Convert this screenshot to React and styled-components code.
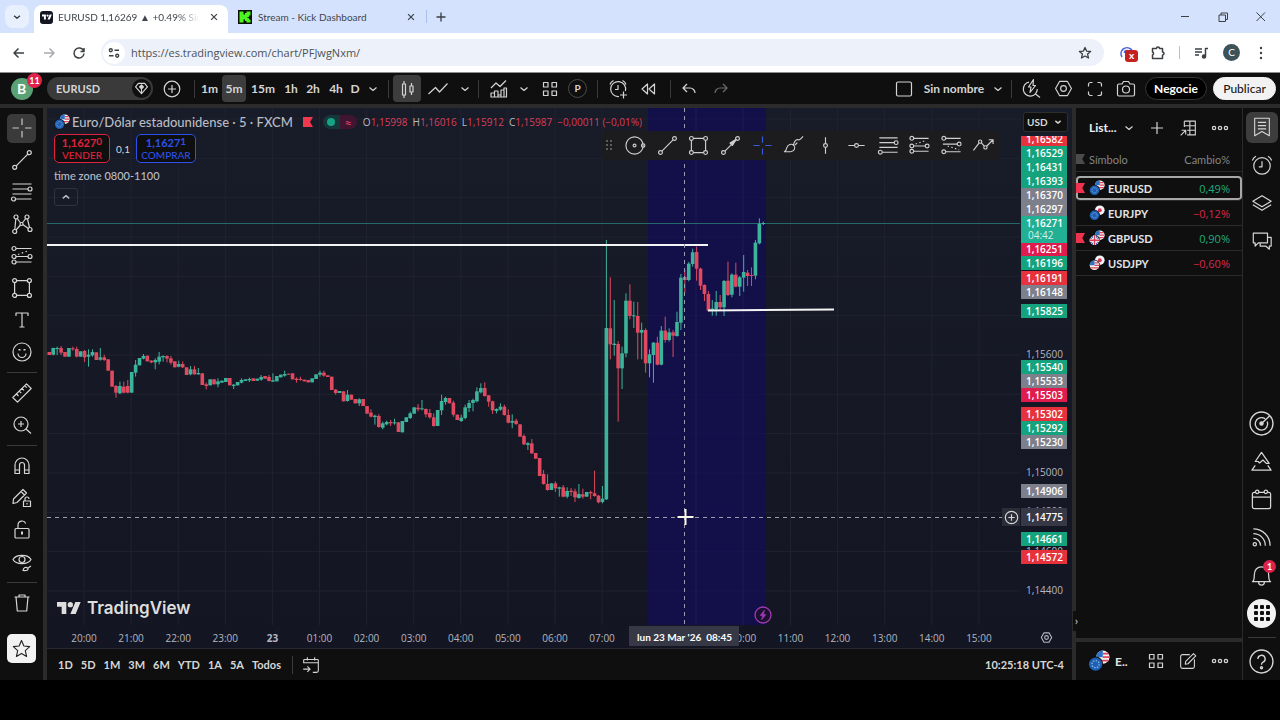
import styled, { createGlobalStyle } from "styled-components";

const UP = "#3cb49c";
const DOWN = "#e0495f";
const TAG = { green: "#14a37d", red: "#e5323d", pink: "#e01b4d", gray: "#7d7f8a", live: "#22b095" };

const HOUR = 47.1;
const FIRST_HOUR = 37;

// one entry per 5m bar: direction, body top, body bottom, [wick top, wick bottom], in thirds of a pixel
const RUNS = [
    {
        top: 222,
        bars: `d 66 75,u 54 74 53 76,u 54 56 50 75,d 54 68 48 75,d 66 80,u 54 80,d 55 58 50 62,d 57 80 50 82,u 64 80,
        d 63 82 60 96,u 74 80 58 110,u 66 76 58 80,d 67 90,u 82 89 54 92,d 82 90 74 93,d 88 122,d 122 170,d 168 188 165 203,
        u 168 190 155 192,d 170 188 155 190,d 168 188 150 190,u 126 188,u 104 128 90 140,u 84 106,u 78 86 72 88,d 77 94,
        d 92 97 90 100,u 90 97 85 118,u 80 95 66 103,u 78 82 76 95,d 78 86 76 97,d 85 98 78 104,d 94 112,u 102 110 92 112,
        d 102 112 94 114,d 112 135,u 118 133 108 136,d 118 133 108 134,u 129 133 114 134,d 130 165,d 163 168 158 178,
        u 148 166,d 148 163,u 154 163 145 172,u 152 158,u 144 156,d 144 166,u 164 168 162 177,u 156 166,u 150 158 145 160,
        u 148 153,u 147 151 143 156,d 145 153,u 146 152,u 141 149 135 152,d 138 146,d 141 153 135 154,u 151 155 130 156,
        u 138 154,u 134 142,u 132 137 122 140,d 131 134,d 130 148,d 146 150 142 158,d 147 150 140 152,d 149 154,d 150 157,
        u 145 157,u 133 147,u 128 134 122 140,d 128 137 122 140,d 136 141,d 140 180,d 179 189 177 194,u 183 189,d 184 214,
        u 194 213 180 215,d 194 209,d 207 220,u 208 220 205 228`,
    },
    {
        top: 262,
        bars: `d 87 108,d 108 131,d 128 140 118 142,u 137 141 134 164,d 138 171 132 173,u 160 173 155 178,u 156 163 152 166,
        d 156 160 150 168,u 157 160 146 164,d 157 186,u 153 187,u 142 156,u 130 144 125 147,u 112 131,d 113 118 102 124,
        u 115 118 90 121,d 117 133 115 142,d 129 142 117 146,d 142 168 130 170,u 120 168,u 93 121 74 135,u 84 96 80 104,
        d 84 100,d 98 134 92 140,d 134 150,u 143 153 134 156,u 112 144 104 148,u 99 114 90 126,u 90 99 86 124,u 64 94 52 97,
        u 54 67 40 70,d 54 78 37 80,d 76 95 75 110,d 94 121 92 132,u 117 123 115 130,u 110 119 100 122,d 110 135 104 137,
        d 135 158 118 160,u 153 158 133 175,d 152 162 146 165,d 163 200,d 198 223 193 225,u 220 225 216 240,
        d 220 250 207 252,d 249 266,d 264 318,d 312 342 300 344,d 342 360 313 362,u 340 360,d 340 355 334 366,
        u 352 356 350 380,d 352 380 345 382,u 363 380 352 385,d 362 366 354 378,d 364 382 356 396,u 372 384 342 386,
        d 373 380 356 386,u 366 380,d 366 370 362 388,d 370 378 302 380,d 377 397 375 400,u 386 396 348 400,
        u -126 388 -390 390`,
    },
    {
        top: 82,
        bars: `d 415 463 262 508,u 461 465 330 497,d 462 535 453 695,u 490 535 470 597,u 332 490 310 502,d 332 378 283 388,
        u 376 379 335 414,d 378 428 336 508,u 420 428 398 508,d 420 520 415 548,u 493 520 478 562,u 458 495 456 578,
        d 458 524 440 526,u 422 524 408 526,d 422 450 380 458,u 427 450 415 455,d 427 437 420 501,u 396 438 365 440,
        u 263 398 252 420,d 261 270 240 308,u 221 270 216 274,u 187 222 176 230,d 186 236 170 272,d 236 287 233 300,
        d 285 312 283 333,d 312 362 303 364,u 356 360 330 377,u 336 358 303 377,d 336 352 315 362,u 273 352 270 378,
        d 272 315 215 318,u 254 314 250 322,d 254 290 218 292,u 262 290 258 318,u 246 263 195 305,d 248 258 240 288,
        d 255 258 232 288,u 158 257 150 268,u 101 160 85 163,u 99 101 95 105`,
    },
];

const bars = RUNS.flatMap(({ top, bars }) =>
    bars.split(",").map((bar) => {
        const [dir, ...v] = bar.trim().split(" ");
        const [a, b, hi = a, lo = b] = v.map((n) => top + Number(n) / 3);
        return { up: dir === "u", a, b, hi, lo };
    })
);

// the cursor label hides 08:00 and 09:00
const times = ["20:00", "21:00", "22:00", "23:00", "23", "01:00", "02:00", "03:00", "04:00", "05:00", "06:00", "07:00",
    "", "", "10:00", "11:00", "12:00", "13:00", "14:00", "15:00"];

const prices = [
    ["1,15600", 246], ["1,15000", 364], ["1,14800", 403], ["1,14600", 443], ["1,14400", 482],
    ["1,16582", 31, "red"], ["1,16529", 45, "green"], ["1,16431", 59, "green"], ["1,16393", 73, "green"],
    ["1,16370", 87, "gray"], ["1,16297", 101, "gray"], ["1,16251", 141, "pink"], ["1,16196", 155, "green"],
    ["1,16191", 170, "red"], ["1,16148", 184, "gray"], ["1,15825", 203, "green"], ["1,15540", 259, "green"],
    ["1,15533", 273, "gray"], ["1,15503", 287, "pink"], ["1,15302", 306, "red"], ["1,15292", 320, "green"],
    ["1,15230", 334, "gray"], ["1,14906", 383, "gray"], ["1,14661", 431, "green"], ["1,14572", 449, "red"],
];

const watchlist = [
    { name: "EURUSD", change: "0,49%", flags: ["us", "eu"], marked: true, selected: true },
    { name: "EURJPY", change: "−0,12%", flags: ["jp", "eu"] },
    { name: "GBPUSD", change: "0,90%", flags: ["us", "gb"], marked: true },
    { name: "USDJPY", change: "−0,60%", flags: ["jp", "us"] },
];

const dot = (x, y, r = 2) => <circle cx={x} cy={y} r={r} />;

// all icons are drawn on a 24 unit grid
const ICONS = {
    down: <path d="M8.5 10.5l3.5 3 3.5-3" />,
    up: <path d="M8.5 13.5l3.5-3 3.5 3" />,
    close: <path d="M8.5 8.5l7 7M15.5 8.5l-7 7" />,
    plus: <path d="M12 6v12M6 12h12" />,
    back: <path d="M17 12H7M11.5 7.5L7 12l4.5 4.5" />,
    forward: <path d="M7 12h10M12.5 7.5L17 12l-4.5 4.5" />,
    reload: <path d="M16.6 10A5 5 0 1 0 17 12.5M17 7v3.5h-3.5" />,
    tune: <><circle cx="8.5" cy="9" r="1.6" /><path d="M12.5 9h5M6.5 15h5" /><circle cx="15.5" cy="15" r="1.6" /></>,
    bookmarkStar: <path d="M12 6.5l1.6 3.6 4 .4-3 2.6.9 3.9-3.5-2-3.5 2 .9-3.9-3-2.6 4-.4z" />,
    puzzle: <path d="M6.5 7.5h4a1.5 1.5 0 0 1 3 0h3v3.5a1.5 1.5 0 0 1 0 3v3.5h-10v-3.5a1.6 1.6 0 0 0 0-3z" />,
    music: <><path d="M6 8h7M6 11h7M6 14h4M16.5 15.5v-8h2.5" /><circle cx="15" cy="15.5" r="1.5" fill="currentColor" /></>,
    kebab: <g fill="currentColor" stroke="none">{dot(12, 7, 1.2)}{dot(12, 12, 1.2)}{dot(12, 17, 1.2)}</g>,
    minimize: <path d="M8 11.5h8" />,
    restore: <path d="M8 10h6.5v6.5H8zM10 10V8h6.5v6.5h-2" />,
    winClose: <path d="M7.5 7.5L16 16M16 7.5L7.5 16" />,
    gem: <><path d="M8 5.5h8l3.5 4.5-7.500 8.5L4.500 10z" /><path d="M12 7.500l2.500 2.500-2.500 2.500L9.500 10z" fill="currentColor" /><path d="M12 12.5V18" /></>,
    plusCircle: <><circle cx="12" cy="12" r="7.8" /><path d="M12 8v8M8 12h8" /></>,
    candles: <path d="M7.5 7h3v11h-3zM9 4v3M9 18v3M15 9h3v6h-3zM16.5 6v3M16.5 15v3" />,
    line: <path d="M2.5 17l7-6.5 4 4.5 8-8.5" />,
    indicators: <path d="M4 20v-4h3.5v4zM7.5 20v-6H11v6M11 18h3v2M14 20v-7h3M17 20v-9h2.5v9zM4 20h15.5M4 11l5-5 4 3.5 6-6" />,
    grid: <path d="M5.5 5.5H10V10H5.5zM14 5.5h4.5V10H14zM5.5 14H10v4.5H5.5zM14 14h4.5v4.5H14z" />,
    alarmAdd: <path d="M13 19.5a7.5 7.5 0 1 1 6.4-5.5M12 8v4.5H9M4 7.5a7 7 0 0 1 3.5-4M20 7.5a7 7 0 0 0-3.5-4M17.5 14.5v7M14 18h7" />,
    rewind: <path d="M11.5 7v10L6 12zM18.5 7v10L13 12z" />,
    undo: <path d="M10 7l-4 4 4 4M6 11h7a5 5 0 0 1 5 5" />,
    redo: <path d="M14 7l4 4-4 4M18 11h-7a5 5 0 0 0-5 5" />,
    square: <rect x="4.5" y="5" width="15" height="14" rx="1.5" />,
    quick: <><path d="M10 5.2a7 7 0 1 0 8.3 6.8M16.5 17l4.5 3.5" /><path d="M14.5 2.5L9.5 10H12l-1 5.5 5.5-7H14z" /></>,
    hexagon: <><path d="M8 4.5h8l4.3 7.5-4.3 7.5H8L3.7 12z" /><circle cx="12" cy="12" r="3" /></>,
    fullscreen: <path d="M5.5 9.5v-2a2 2 0 0 1 2-2h2M14.5 5.5h2a2 2 0 0 1 2 2v2M18.5 14.5v2a2 2 0 0 1-2 2h-2M9.5 18.5h-2a2 2 0 0 1-2-2v-2" />,
    camera: <><path d="M5 7h3l1.5-2.5h5L16 7h3a1.5 1.5 0 0 1 1.5 1.5v9A1.5 1.5 0 0 1 19 19H5a1.5 1.5 0 0 1-1.5-1.5v-9A1.5 1.5 0 0 1 5 7z" /><circle cx="12" cy="12.5" r="3.5" /></>,
    cross: <path d="M12 2.5V9M12 15v6.5M2.5 12H9M15 12h6.5" />,
    trend: <>{dot(4.7, 19.3)}{dot(19.3, 4.7)}<path d="M6.2 17.8L17.8 6.2" /></>,
    fib: <>{dot(20, 9)}{dot(3.5, 19)}<path d="M2.5 4h19M2.5 9H18M2.5 14h19M5.5 19h16" /></>,
    pattern: <>{dot(6, 5)}{dot(17, 5)}{dot(4.7, 19.5)}{dot(20, 17.5)}{dot(11.5, 12, 1.5)}<path d="M5.8 7l-1 10.5M7.2 6.5l3.5 4.5M15.8 6.5l-3.5 4.5M17.5 7l2 8.5M18.3 16.5l-5.5-4M10.5 13L6 18" /></>,
    forecast: <>{dot(4, 4.5)}{dot(4, 12.5)}{dot(20, 12.5)}{dot(4, 18)}<path d="M6 4.5h15.5M6 12.5h12M6 18h15.5" /><path d="M8 10.5l11-4" strokeDasharray="1.5 2.5" /></>,
    forecastDown: <>{dot(4, 4.5)}{dot(4, 18.5)}{dot(20, 10.5)}<path d="M6 4.5h15.5M3 10.5h15M6 18.5h15.5" /><path d="M8 12.5l12 4" strokeDasharray="1.5 2.5" /></>,
    rect: <>{dot(4.6, 4.6)}{dot(19.4, 4.6)}{dot(4.6, 19.4)}{dot(19.4, 19.4)}<path d="M6.6 4.6h10.8M6.6 19.4h10.8M4.6 6.6v10.8M19.4 6.6v10.8" /></>,
    text: <path d="M6 8V5h12v3M12 5v14M9.5 19h5" />,
    smile: <><circle cx="12" cy="12" r="9" /><path d="M8 13.5a4 4 0 0 0 8 0" /><path d="M9.5 9v1.5M14.5 9v1.5" strokeWidth="2" /></>,
    ruler: <path d="M2.8 16.5L16.5 2.8l4.7 4.7L7.5 21.2zM6.5 13l2 2M9.3 10.2l2 2M12 7.4l2 2M14.8 4.7l2 2" />,
    zoomIn: <><circle cx="11" cy="11" r="7" /><path d="M16 16l5 4.5M11 8v6M8 11h6" /></>,
    magnet: <path d="M5 19.5V11a7 7 0 0 1 14 0v8.5h-4.5V11a2.5 2.5 0 0 0-5 0v8.5zM5 16h4.5M14.5 16H19" />,
    pencilLock: <path d="M3 17.5L3.5 13 13 3.5 16.5 7 7 16.5zM11 5.5L14.5 9M13.5 15h7v5.5h-7zM15 15v-2a2 2 0 0 1 4 0M17 17v1.5" />,
    lock: <><rect x="5" y="10.5" width="14" height="9.5" rx="1" /><path d="M8 10.5V7a4 4 0 0 1 7.7-1.5" /><path d="M12 13.5v3" strokeWidth="2" /></>,
    eye: <><path d="M3 9.5C6 4 18 4 21 9.5 18 15 6 15 3 9.5z" /><circle cx="12" cy="9.5" r="3" /><path d="M13 20.5c.5-3 3-4 4.5-2.5s0 3-4.5 2.5zM18 18l3-2" /></>,
    trash: <path d="M4.5 6h15M9 6V4h6v2M6 6l1.3 14h9.4L18 6" />,
    star: <path d="M12 2l3 6.8 7.3.8-5.5 5 1.6 7.4-6.4-3.8L5.6 22l1.6-7.4-5.5-5L9 8.8z" />,
    cycle: <><circle cx="11" cy="12" r="9" />{dot(11, 12, 1.5)}{dot(20, 12, 1.8)}</>,
    arrow: <>{dot(4.7, 19.3)}{dot(19.3, 4.7)}<path d="M6.2 17.8L17.8 6.2" /><path d="M11.5 9.5l6.5-4-4 6.5z" fill="currentColor" /></>,
    brush: <path d="M2.5 18.5c1.5-.5 2-2 2.5-4 .8-3.5 5-5 7.5-2.5 2 2.5.5 6-3.5 6.5zM12 12.5c0-4 2.5-7.5 5-6.5 1.5.7 2-.5 5-3.5M13.5 11.5L16 9" />,
    vline: <>{dot(12, 12)}<path d="M12 3.5V10M12 14v6.5" /></>,
    hline: <>{dot(12, 12)}<path d="M3.5 12H10M14 12h6.5" /></>,
    zigzag: <>{dot(8.5, 8, 1.7)}{dot(14, 14, 1.7)}<path d="M1.5 17l5.8-7.5M9.8 9.2l3 3.5M15.2 12.8L22 6M17.5 6H22v4.5" /></>,
    table: <path d="M8 4.5h12v15h-9M8 4.5V11M8 9.5h12M14 4.5v15M11 14.5h9M4 20l5.5-5.5M5 14.5h4.5V19" />,
    dots: <>{dot(5.5, 12, 1.8)}{dot(12, 12, 1.8)}{dot(18.5, 12, 1.8)}</>,
    list: <path d="M4 2.5h16v19L12 17l-8 4.5zM7.5 7h9M7.5 10.5h9M7.5 14h9" />,
    clock: <><circle cx="12" cy="13" r="9" /><path d="M12 8v6H8.5M1.5 7a9 9 0 0 1 4-4.5M22.5 7a9 9 0 0 0-4-4.5" /></>,
    layers: <path d="M12 4l10 6-10 6-10-6zM2 14l10 6 10-6" />,
    chat: <path d="M2.5 3.5H18V14H8l-3.5 3.5V14h-2zM18 8h4v9.5h-2V21l-4-3.5h-6V14" />,
    target: <><circle cx="12" cy="12" r="11" /><path d="M15.5 7.5A6 6 0 1 0 17.5 10" /><circle cx="12" cy="12" r="1.5" fill="currentColor" /><path d="M12 12l8-7.5" /></>,
    mountain: <path d="M12 2.5L20 14h-3l-3.5-3.5-3.5 3L8.500 12h-3zM5.5 16L2 21h20l-3.5-5" />,
    calendar: <><rect x="2.5" y="4.5" width="19" height="17" rx="2" /><path d="M2.5 9.5h19" /><g fill="#0f0f0f">{dot(7.5, 4, 1.8)}{dot(16.5, 4, 1.8)}</g></>,
    feed: <>{dot(5, 19, 1.7)}<path d="M3.5 13a7.5 7.5 0 0 1 7.5 7.5M3.5 8A12.500 12.500 0 0 1 16 20.5M3.5 3A17.5 17.5 0 0 1 21 20.5" /></>,
    bell: <path d="M2.5 18.5c2-1 2-3 2-7C4.5 6 7.500 3 12 3s7.5 3 7.5 8.5c0 4 0 6 2 7zM9 19c0 4 6 4 6 0" />,
    help: <><circle cx="12" cy="12" r="11" /><path d="M8.5 9.5a3.5 3.5 0 1 1 5 3.2c-1 .5-1.5 1-1.5 2.3" /><circle cx="12" cy="18" r="1" /></>,
    goto: <path d="M4 10V7a1 1 0 0 1 1-1h14a1 1 0 0 1 1 1v11a2 2 0 0 1-2 2h-4M4 9.5h16M8 3.5V7M16 3.5V7M3.5 16.5h7M8 13.5l3 3-3 3" />,
    edit: <path d="M14 5H6a2 2 0 0 0-2 2v11a2 2 0 0 0 2 2h11a2 2 0 0 0 2-2v-8M9 15.5l.5-3L18 4l2.5 2.5L12 15z" />,
};

function Icon({ name, size = 24, weight = 1.2 }) {
    return (
        <svg width={size} height={size} viewBox="0 0 24 24" fill="none" stroke="currentColor" strokeWidth={weight}
            strokeLinejoin="round" aria-hidden="true">
            {ICONS[name]}
        </svg>
    );
}

function FlagDisc({ code, x, y }) {
    const r = 4.8;
    if (code === "eu") {
        return (
            <g>
                <circle cx={x} cy={y} r={r} fill="#1d5fb4" />
                <circle cx={x} cy={y} r="2.6" fill="none" stroke="#8fb9dc" strokeDasharray="1 1" />
            </g>
        );
    }
    if (code === "jp") {
        return (
            <g>
                <circle cx={x} cy={y} r={r} fill="#f4f4f4" />
                <circle cx={x} cy={y} r="2" fill="#d8335a" />
            </g>
        );
    }
    if (code === "gb") {
        return (
            <g>
                <circle cx={x} cy={y} r={r} fill="#5a6fb0" />
                <path d={`M${x - 3.3} ${y - 3.3}l6.6 6.6M${x + 3.3} ${y - 3.3}l-6.6 6.6`} stroke="#eee" />
                <path d={`M${x} ${y - r}v${2 * r}M${x - r} ${y}h${2 * r}`} stroke="#fff" strokeWidth="3" />
                <path d={`M${x} ${y - r}v${2 * r}M${x - r} ${y}h${2 * r}`} stroke="#dd3b55" strokeWidth="1.5" />
            </g>
        );
    }
    return (
        <g>
            <circle cx={x} cy={y} r={r} fill="#f2f2f2" />
            <path d={`M${x} ${y - 2.5}h4M${x} ${y}h4.5M${x - 4} ${y + 2.5}h8`} stroke="#e0455a" strokeWidth="1.3" />
            <path d={`M${x} ${y - r}v${r}h${-r}a${r} ${r} 0 0 1 ${r} ${-r}z`} fill="#2d72c4" />
        </g>
    );
}

function FlagPair({ flags, size = 16 }) {
    return (
        <svg width={size} height={size} viewBox="0 0 16 16" aria-hidden="true">
            <FlagDisc code={flags[0]} x={10.8} y={5.2} />
            <circle cx="5.5" cy="10.3" r="5.5" fill="#0f0f0f" />
            <FlagDisc code={flags[1]} x={5.5} y={10.3} />
        </svg>
    );
}

function Flag({ color, width = 9 }) {
    return (
        <svg width={width} height="10" viewBox="0 0 10 10" preserveAspectRatio="none" aria-hidden="true">
            <path d="M0 0h10L7 5l3 5H0z" fill={color} />
        </svg>
    );
}

function LogoMark({ width = 24, height = 12 }) {
    return (
        <svg width={width} height={height} viewBox="0 4 36 18" fill="currentColor" aria-hidden="true">
            <path d="M14 22H7V11H0V4h14zM28 22h-8l7.5-18h8z" />
            <circle cx="20" cy="8" r="4" />
        </svg>
    );
}

function Plot() {
    return (
        <Canvas aria-label="EURUSD 5m">
            <g stroke="#20232f">
                {times.map((t, i) => (
                    <line key={i} x1={FIRST_HOUR + HOUR * i} x2={FIRST_HOUR + HOUR * i} y1="0" y2="517" />
                ))}
                {Array.from({ length: 13 }, (_, i) => (
                    <line key={i} x1="0" x2="100%" y1={11 + 39.33 * i} y2={11 + 39.33 * i} />
                ))}
            </g>
            <rect x="601" y="0" width="118" height="517" fill="#130f49" />
            <g stroke="#1e1b55">
                <line x1="649" x2="649" y1="0" y2="517" />
                <line x1="696" x2="696" y1="0" y2="517" />
                {Array.from({ length: 13 }, (_, i) => (
                    <line key={i} x1="601" x2="719" y1={11 + 39.33 * i} y2={11 + 39.33 * i} opacity="0.4" />
                ))}
            </g>
            <line x1="0" x2="100%" y1="115.5" y2="115.5" stroke="#23696a" />
            {bars.map(({ up, a, b, hi, lo }, i) => {
                const x = 2.3 + i * 3.923;
                return (
                    <g key={i} fill={up ? UP : DOWN}>
                        <rect x={x - 0.5} y={hi} width="1" height={lo - hi} />
                        <rect x={x - 1.8} y={a} width="3.6" height={Math.max(b - a, 1)} />
                    </g>
                );
            })}
            <g stroke="#f4f4f4" strokeWidth="2">
                <line x1="0" x2="661" y1="137" y2="137" />
                <line x1="661" x2="787" y1="202.5" y2="201.5" />
            </g>
            <g stroke="#9a9daa" strokeDasharray="4 4">
                <line x1="637.5" x2="637.5" y1="0" y2="517" />
                <line x1="0" x2="100%" y1="409.5" y2="409.5" />
            </g>
            <path d="M638.5 401v16M630.5 409h16" stroke="#fbfbe4" strokeWidth="2" />
            <g transform="translate(716 507)" stroke="#a13bb5" fill="none">
                <circle r="8" fill="#1c0f30" strokeWidth="1.3" />
                <path d="M1.5-5L-3 .5h2.5L-1.5 5 3-.5H.5z" fill="#a13bb5" strokeWidth="0.5" />
            </g>
        </Canvas>
    );
}

function BrowserChrome() {
    return (
        <header>
            <TabStrip>
                <TabSearch aria-label="Buscar pestañas"><Icon name="down" weight={1.8} size={20} /></TabSearch>
                <Tab $active $width={194}>
                    <Favicon><LogoMark width={10} height={6} /></Favicon>
                    <TabTitle $fade>EURUSD 1,16269 ▲ +0.49% Sin</TabTitle>
                    <Icon name="close" size={20} weight={1.5} />
                </Tab>
                <Tab $width={198}>
                    <svg width="14" height="14" viewBox="0 0 14 14" aria-hidden="true">
                        <rect width="14" height="14" fill="#081004" />
                        <path d="M1.5 1.5h4v3H7V3h1.5V1.5h4v4H11V7H9.5v1H11v1.5h1.5v3h-4V11H7V9.5H5.5v3h-4z" fill="#4df51e" />
                    </svg>
                    <TabTitle>Stream - Kick Dashboard</TabTitle>
                    <Icon name="close" size={20} weight={1.5} />
                </Tab>
                <TabRule $gap={0} />
                <ChromeButton aria-label="Nueva pestaña" $width={28}><Icon name="plus" size={18} weight={1.8} /></ChromeButton>
                <Spacer />
                <ChromeButton aria-label="Minimizar" $width={38}><Icon name="minimize" weight={1} /></ChromeButton>
                <ChromeButton aria-label="Restaurar" $width={38}><Icon name="restore" weight={1} /></ChromeButton>
                <ChromeButton aria-label="Cerrar" $width={38}><Icon name="winClose" weight={1} /></ChromeButton>
            </TabStrip>
            <AddressRow>
                <ChromeButton aria-label="Atrás" $width={30}><Icon name="back" weight={1.5} /></ChromeButton>
                <ChromeButton aria-label="Adelante" $width={30} $dim><Icon name="forward" weight={1.5} /></ChromeButton>
                <ChromeButton aria-label="Recargar" $width={30}><Icon name="reload" weight={1.5} /></ChromeButton>
                <Omnibox>
                    <SiteInfo><Icon name="tune" size={22} weight={1.5} /></SiteInfo>
                    <UrlInput aria-label="Dirección" defaultValue="https://es.tradingview.com/chart/PFJwgNxm/" />
                    <Icon name="bookmarkStar" weight={1.3} />
                </Omnibox>
                <Extension>
                    <svg width="16" height="16" viewBox="0 0 16 16" fill="none" aria-hidden="true">
                        <path d="M3 12a6 6 0 1 1 10 0M5.5 8a2.5 2.5 0 0 1 5 0" stroke="#4a63d8" strokeWidth="1.6" />
                    </svg>
                    <ExtensionBadge>x</ExtensionBadge>
                </Extension>
                <ChromeButton aria-label="Extensiones" $width={30}><Icon name="puzzle" weight={1.5} /></ChromeButton>
                <TabRule $gap={6} />
                <ChromeButton aria-label="Multimedia" $width={30}><Icon name="music" weight={1.5} /></ChromeButton>
                <Profile>C</Profile>
                <ChromeButton aria-label="Menú" $width={30}><Icon name="kebab" /></ChromeButton>
            </AddressRow>
        </header>
    );
}

function TopBar() {
    return (
        <Bar>
            <AvatarSlot>
                <Avatar>B</Avatar>
                <AvatarBadge>11</AvatarBadge>
            </AvatarSlot>
            <SymbolPill>
                EURUSD
                <SymbolGem><Icon name="gem" size={19} weight={1.4} /></SymbolGem>
            </SymbolPill>
            <Tool $width={38} aria-label="Comparar"><Icon name="plusCircle" /></Tool>
            <Rule $width={6} />
            <Tool $width={25}>1m</Tool>
            <Tool $width={24} $on>5m</Tool>
            <Tool $width={34}>15m</Tool>
            <Tool $width={22}>1h</Tool>
            <Tool $width={22}>2h</Tool>
            <Tool $width={24}>4h</Tool>
            <Tool $width={14}>D</Tool>
            <Tool $width={22} aria-label="Intervalos"><Icon name="down" /></Tool>
            <Rule $width={9} />
            <Tool $width={28} $on aria-label="Velas"><Icon name="candles" /></Tool>
            <Tool $width={34} aria-label="Línea"><Icon name="line" /></Tool>
            <Tool $width={20} aria-label="Tipos"><Icon name="down" /></Tool>
            <Rule $width={6} />
            <Tool $width={36} aria-label="Indicadores"><Icon name="indicators" /></Tool>
            <Tool $width={14} aria-label="Favoritos"><Icon name="down" /></Tool>
            <Tool $width={37} aria-label="Plantillas"><Icon name="grid" /></Tool>
            <RoundTool>P</RoundTool>
            <Rule $width={21} />
            <Tool $width={20} aria-label="Alerta"><Icon name="alarmAdd" /></Tool>
            <Tool $width={40} aria-label="Repetición"><Icon name="rewind" /></Tool>
            <Rule $width={4} />
            <Tool $width={34} aria-label="Deshacer"><Icon name="undo" /></Tool>
            <Tool $width={30} $dim aria-label="Rehacer"><Icon name="redo" /></Tool>
            <Spacer />
            <Tool $width={28} aria-label="Diseño"><Icon name="square" /></Tool>
            <Tool $width={72}>Sin nombre</Tool>
            <Tool $width={16} aria-label="Diseños"><Icon name="down" /></Tool>
            <Rule $width={10} />
            <Tool $width={30} aria-label="Búsqueda rápida"><Icon name="quick" /></Tool>
            <Tool $width={34} aria-label="Configuración"><Icon name="hexagon" size={23} /></Tool>
            <Tool $width={30} aria-label="Pantalla completa"><Icon name="fullscreen" /></Tool>
            <Tool $width={32} aria-label="Captura"><Icon name="camera" /></Tool>
            <Pill>Negocie</Pill>
            <Pill $light>Publicar</Pill>
        </Bar>
    );
}

function DrawingRail() {
    const groups = [
        ["trend", "fib", "pattern", "forecast", "rect", "text", "smile"],
        ["ruler", "zoomIn"],
        ["magnet", "pencilLock", "lock", "eye"],
        ["trash"],
    ];
    return (
        <LeftRail>
            <RailButton aria-label="cross"><RailFace><Icon name="cross" /></RailFace></RailButton>
            {groups.map((group, i) => (
                <RailGroup key={i}>
                    {group.map((name) => (
                        <RailButton key={name} aria-label={name}><Icon name={name} /></RailButton>
                    ))}
                </RailGroup>
            ))}
            <Spacer />
            <RailButton aria-label="star"><RailFace $light><Icon name="star" size={19} weight={1.4} /></RailFace></RailButton>
        </LeftRail>
    );
}

function Legend() {
    const ohlc = [["O", "1,15998"], ["H", "1,16016"], ["L", "1,15912"], ["C", "1,15987"]];
    return (
        <LegendBox>
            <LegendRow>
                <FlagPair flags={["us", "eu"]} />
                <LegendTitle>Euro/Dólar estadounidense · 5 · FXCM</LegendTitle>
                <Flag color="#f0384f" width={10} />
                <Status>
                    <StatusHalf $bg="#14373a"><StatusDot /></StatusHalf>
                    <StatusHalf $bg="#40152f">≈</StatusHalf>
                </Status>
                {ohlc.map(([k, v]) => (
                    <Quote key={k}><b>{k}</b>{v}</Quote>
                ))}
                <Quote>−0,00011 (−0,01%)</Quote>
            </LegendRow>
            <TradeRow>
                <TradeButton $color="#e0213f" $width={56}><span>1,1627<sup>0</sup></span>VENDER</TradeButton>
                <Spread>0,1</Spread>
                <TradeButton $color="#2d51e8" $width={60}><span>1,1627<sup>1</sup></span>COMPRAR</TradeButton>
            </TradeRow>
            <StudyName>time zone 0800-1100</StudyName>
            <Collapse aria-label="Contraer"><Icon name="up" size={22} weight={1.5} /></Collapse>
        </LegendBox>
    );
}

function Chart() {
    const favorites = ["cycle", "trend", "rect", "arrow", "cross", "brush", "vline", "hline", "fib", "forecast", "forecastDown", "zigzag"];
    return (
        <ChartColumn>
            <ChartArea>
                <Pane>
                    <Plot />
                    <Legend />
                    <FavoritesBar>
                        <Grip />
                        {favorites.map((name) => (
                            <FavoriteTool key={name} $blue={name === "cross"} aria-label={name}><Icon name={name} size={23} /></FavoriteTool>
                        ))}
                    </FavoritesBar>
                    <Watermark><LogoMark /> TradingView</Watermark>
                    <AddAlert aria-label="Añadir alerta"><Icon name="plusCircle" size={19} weight={1.5} /></AddAlert>
                </Pane>
                <PriceAxis>
                    {prices.map(([text, y, kind]) => (
                        <PriceTag key={text} $kind={kind} style={{ top: y - 7 }}>{text}</PriceTag>
                    ))}
                    <LiveTag style={{ top: 108 }}>1,16271<small>04:42</small></LiveTag>
                    <CursorPrice style={{ top: 400 }}>1,14775</CursorPrice>
                    <AxisHead>
                        <CurrencyBox>
                            <Currency aria-label="Moneda" defaultValue="USD"><option>USD</option></Currency>
                            <Icon name="down" size={18} weight={1.8} />
                        </CurrencyBox>
                    </AxisHead>
                </PriceAxis>
            </ChartArea>
            <TimeAxis>
                {times.map((t, i) => t && (
                    <TimeLabel key={i} $bold={t === "23"} style={{ left: FIRST_HOUR + HOUR * i }}>{t}</TimeLabel>
                ))}
                <CursorTime style={{ left: 637 }}><span>lun 23 Mar '26</span><span>08:45</span></CursorTime>
                <AxisSettings aria-label="Ajustes del eje"><Icon name="hexagon" size={15} weight={1.8} /></AxisSettings>
            </TimeAxis>
            <RangeBar>
                {["1D", "5D", "1M", "3M", "6M", "YTD", "1A", "5A", "Todos"].map((r) => (
                    <Range key={r}>{r}</Range>
                ))}
                <Rule $width={6} />
                <Tool $width={32} aria-label="Ir a"><Icon name="goto" size={22} /></Tool>
                <Spacer />
                <Clock>10:25:18 UTC-4</Clock>
            </RangeBar>
        </ChartColumn>
    );
}

function WatchPanel() {
    return (
        <Panel>
            <PanelHead>
                <PanelTitle>List...</PanelTitle>
                <Tool $width={24} aria-label="Listas"><Icon name="down" /></Tool>
                <Tool $width={32} aria-label="Añadir"><Icon name="plus" /></Tool>
                <Tool $width={30} aria-label="Vista"><Icon name="table" size={22} /></Tool>
                <Tool $width={34} aria-label="Más"><Icon name="dots" size={22} weight={1.4} /></Tool>
            </PanelHead>
            <Table>
                <thead>
                    <HeadRow>
                        <FlagCell as="th" aria-label="Marca"><Flag color="#4b4b4b" /></FlagCell>
                        <NameHead>Símbolo</NameHead>
                        <ChangeHead>Cambio%</ChangeHead>
                    </HeadRow>
                </thead>
                <tbody>
                    {watchlist.map((w) => (
                        <Row key={w.name} $selected={w.selected}>
                            <FlagCell>{w.marked && <Flag color="#ee3350" />}</FlagCell>
                            <NameCell><FlagPair flags={w.flags} />{w.name}</NameCell>
                            <ChangeCell $down={w.change.startsWith("−")}>{w.change}</ChangeCell>
                        </Row>
                    ))}
                </tbody>
            </Table>
            <Spacer />
            <CollapsePanel aria-label="Ocultar panel">›</CollapsePanel>
            <DetailBar>
                <FlagPair flags={["us", "eu"]} size={22} />
                <DetailName>E..</DetailName>
                <Tool $width={32} aria-label="Vista"><Icon name="grid" /></Tool>
                <Tool $width={32} aria-label="Nota"><Icon name="edit" size={22} /></Tool>
                <Tool $width={32} aria-label="Más"><Icon name="dots" size={22} weight={1.4} /></Tool>
            </DetailBar>
        </Panel>
    );
}

function WidgetRail() {
    return (
        <RightRail>
            <WidgetButton aria-label="list"><WidgetFace><Icon name="list" size={22} /></WidgetFace></WidgetButton>
            {["clock", "layers", "chat"].map((n) => (
                <WidgetButton key={n} aria-label={n}><Icon name={n} size={22} weight={1.3} /></WidgetButton>
            ))}
            <Spacer />
            {["target", "mountain", "calendar", "feed"].map((n) => (
                <WidgetButton key={n} aria-label={n}><Icon name={n} size={n === "target" ? 25 : 23} weight={1.3} /></WidgetButton>
            ))}
            <WidgetButton aria-label="bell"><Icon name="bell" size={23} weight={1.3} /><BellBadge>1</BellBadge></WidgetButton>
            <WidgetButton aria-label="apps">
                <AppsFace>
                    <svg width="16" height="16" viewBox="0 0 16 16" fill="#0f0f0f" aria-hidden="true">
                        {[0, 6, 12].map((y) => [0, 6, 12].map((x) => <rect key={x + "-" + y} x={x} y={y} width="4" height="4" rx="1" />))}
                    </svg>
                </AppsFace>
            </WidgetButton>
            <WidgetRule />
            <WidgetButton aria-label="help"><Icon name="help" size={25} weight={1.3} /></WidgetButton>
        </RightRail>
    );
}

export default function App() {
    return (
        <Screen>
            <GlobalStyle />
            <BrowserChrome />
            <TopBar />
            <Main>
                <DrawingRail />
                <Chart />
                <WatchPanel />
                <WidgetRail />
            </Main>
        </Screen>
    );
}

const GlobalStyle = createGlobalStyle`
* {
    box-sizing: border-box;
}
body {
    margin: 0;
    background: #000;
    font-family: Lato, "Open Sans", sans-serif;
    font-size: 12px;
    color: #d6d6d6;
}
button, input, select {
    margin: 0;
    padding: 0;
    border: none;
    background: none;
    color: inherit;
    font: inherit;
}
svg {
    display: block;
    flex: none;
}
`

const Screen = styled.div`
min-height: 100vh;
display: flex;
flex-direction: column;
padding-bottom: 40px;
`

const Spacer = styled.div`
flex: 1;
`

const TabStrip = styled.div`
height: 33px;
display: flex;
align-items: center;
padding-left: 5px;
background: #d4e2fd;
color: #3c4043;
`

const TabSearch = styled.button`
width: 24px;
height: 23px;
display: flex;
align-items: center;
justify-content: center;
margin-right: 5px;
border-radius: 8px;
background: #e8f0fd;
`

const Tab = styled.button`
align-self: flex-end;
width: ${({ $width }) => $width}px;
height: 28px;
display: flex;
align-items: center;
gap: ${({ $active }) => ($active ? 5 : 6)}px;
padding: 0 ${({ $active }) => ($active ? 4 : 5)}px 4px ${({ $active }) => ($active ? 6 : 10)}px;
border-radius: 8px 8px 0 0;
background: ${({ $active }) => ($active ? "#fff" : "transparent")};
font-size: 10px;
text-align: left;
color: #3f454c;
`

const Favicon = styled.span`
width: 13px;
height: 13px;
display: flex;
align-items: center;
justify-content: center;
border-radius: 3px;
background: #131722;
color: #fff;
`

const TabTitle = styled.span`
flex: 1;
min-width: 0;
overflow: hidden;
white-space: nowrap;
mask-image: ${({ $fade }) => ($fade ? "linear-gradient(90deg, #000 85%, transparent)" : "none")};
`

const TabRule = styled.span`
width: 1px;
height: 13px;
margin: 0 ${({ $gap }) => $gap}px;
background: #a9c0ea;
`

const ChromeButton = styled.button`
width: ${({ $width }) => $width}px;
height: 26px;
display: flex;
align-items: center;
justify-content: center;
color: ${({ $dim }) => ($dim ? "#a8abae" : "#3c4043")};
`

const AddressRow = styled.div`
height: 40px;
display: flex;
align-items: center;
padding: 0 4px;
background: #fff;
border-bottom: 1px solid #8d8d8d;
`

const Omnibox = styled.div`
flex: 1;
height: 27px;
display: flex;
align-items: center;
margin: 0 11px 0 7px;
padding: 0 7px 0 2px;
border-radius: 14px;
background: #edf1fa;
color: #3c4043;
`

const SiteInfo = styled.span`
width: 22px;
height: 22px;
border-radius: 11px;
background: #fff;
`

const UrlInput = styled.input`
flex: 1;
min-width: 0;
padding-left: 6px;
font-family: "Open Sans", sans-serif;
font-size: 11px;
color: #4c5157;
outline: none;
`

const Extension = styled.span`
position: relative;
width: 28px;
padding-left: 4px;
`

const ExtensionBadge = styled.span`
position: absolute;
left: 10px;
top: 5px;
width: 13px;
height: 12px;
border-radius: 3px;
background: #c5221f;
color: #fff;
font-size: 10px;
font-weight: 700;
line-height: 10px;
text-align: center;
`

const Profile = styled.span`
width: 17px;
height: 17px;
margin: 0 6px 0 7px;
border-radius: 50%;
background: #3d5259;
color: #fff;
font-size: 10px;
line-height: 17px;
text-align: center;
`

const Bar = styled.nav`
height: 35px;
display: flex;
align-items: center;
padding-right: 4px;
border-bottom: 4px solid #2b2b2b;
background: #0f0f0f;
font-weight: 700;
`

const AvatarSlot = styled.div`
position: relative;
width: 43px;
height: 31px;
display: flex;
align-items: center;
justify-content: center;
`

const Avatar = styled.span`
width: 22px;
height: 22px;
border-radius: 50%;
background: #5aa275;
color: #fff;
font-size: 14px;
line-height: 22px;
text-align: center;
`

const AvatarBadge = styled.span`
position: absolute;
left: 27px;
top: 0;
width: 15px;
height: 15px;
border-radius: 50%;
background: #e0214b;
color: #fff;
font-size: 9px;
line-height: 15px;
text-align: center;
`

const SymbolPill = styled.button`
width: 106px;
height: 23px;
display: flex;
align-items: center;
justify-content: space-between;
margin-left: 4px;
padding: 0 2px 0 9px;
border-radius: 12px;
background: #3a3a3a;
font-size: 11px;
`

const SymbolGem = styled.span`
width: 19px;
height: 19px;
display: flex;
align-items: center;
justify-content: center;
border-radius: 50%;
background: #0f0f0f;
`

const Tool = styled.button`
flex: none;
width: ${({ $width }) => $width}px;
height: 27px;
display: flex;
align-items: center;
justify-content: center;
border-radius: 4px;
background: ${({ $on }) => ($on ? "#3d3d3d" : "transparent")};
color: ${({ $dim }) => ($dim ? "#6b6b6b" : "#d4d4d4")};
white-space: nowrap;
`

const RoundTool = styled.button`
width: 19px;
height: 19px;
border: 1px solid #4a4a4a;
border-radius: 50%;
font-size: 10px;
line-height: 17px;
`

const Rule = styled.span`
flex: none;
width: ${({ $width }) => $width}px;
height: 18px;
background: linear-gradient(#3a3a3a, #3a3a3a) center / 1px 100% no-repeat;
`

const Pill = styled.button`
width: ${({ $light }) => ($light ? 63 : 62)}px;
height: 23px;
margin-left: ${({ $light }) => ($light ? 6 : 3)}px;
border: 1px solid ${({ $light }) => ($light ? "#f2f2f2" : "#363636")};
border-radius: 12px;
background: ${({ $light }) => ($light ? "#f2f2f2" : "#000")};
color: ${({ $light }) => ($light ? "#1a1a1a" : "#fff")};
font-weight: ${({ $light }) => ($light ? 500 : 700)};
`

const Main = styled.main`
flex: 1;
display: flex;
background: #0f0f0f;
`

const LeftRail = styled.aside`
flex: none;
width: 47px;
display: flex;
flex-direction: column;
padding: 4px 0 16px;
border-right: 4px solid #2b2b2b;
`

const RailGroup = styled.div`
& + & {
    margin-top: 4px;
    padding-top: 5px;
    background: linear-gradient(#3a3a3a, #3a3a3a) center top / 30px 1px no-repeat;
}
`

const RailButton = styled.button`
width: 43px;
height: 32px;
display: flex;
align-items: center;
justify-content: center;
`

const RailFace = styled.span`
width: 29px;
height: 29px;
display: flex;
align-items: center;
justify-content: center;
border-radius: 5px;
background: ${({ $light }) => ($light ? "#f2f2f2" : "#3a3a3a")};
color: ${({ $light }) => ($light ? "#222" : "#c8c8c8")};
`

const ChartColumn = styled.section`
flex: 1;
min-width: 0;
display: flex;
flex-direction: column;
background: linear-gradient(#181b28, #131622);
`

const ChartArea = styled.div`
flex: 1;
display: flex;
min-height: 0;
`

const Pane = styled.div`
position: relative;
flex: 1;
min-width: 0;
overflow: hidden;
`

const Canvas = styled.svg`
position: absolute;
inset: 0;
width: 100%;
height: 100%;
`

const LegendBox = styled.div`
position: relative;
display: flex;
flex-direction: column;
align-items: flex-start;
padding: 4px 0 0 7px;
color: #b9bbc4;
`

const LegendRow = styled.div`
height: 20px;
display: flex;
align-items: center;
white-space: nowrap;
`

const LegendTitle = styled.span`
margin: 0 10px 0 2px;
font-size: 13px;
font-weight: 500;
`

const Status = styled.span`
display: flex;
margin: 0 6px 0 10px;
border-radius: 7px;
overflow: hidden;
`

const StatusHalf = styled.span`
width: 17px;
height: 14px;
display: flex;
align-items: center;
justify-content: center;
background: ${({ $bg }) => $bg};
color: #d63a72;
font-weight: 700;
`

const StatusDot = styled.i`
width: 8px;
height: 8px;
border-radius: 50%;
background: #17a285;
`

const Quote = styled.span`
margin-right: 5px;
font-family: "Open Sans", sans-serif;
font-size: 10px;
font-weight: 500;
color: #dc3d58;

b {
    font-weight: 500;
    color: #b9bbc4;
}
`

const TradeRow = styled.div`
display: flex;
align-items: center;
margin-top: 2px;
`

const TradeButton = styled.button`
width: ${({ $width }) => $width}px;
height: 29px;
display: flex;
flex-direction: column;
align-items: center;
justify-content: center;
border: 1px solid ${({ $color }) => $color};
border-radius: 5px;
background: #0f0f0f;
color: ${({ $color }) => $color};
font-size: 10px;
font-weight: 500;
line-height: 12px;

span {
    font-size: 11px;
    font-weight: 700;
}
sup {
    font-size: 10px;
    line-height: 0;
    vertical-align: 2px;
}
`

const Spread = styled.span`
width: 26px;
font-size: 10px;
text-align: center;
color: #d6d6d6;
`

const StudyName = styled.span`
height: 20px;
margin-top: 3px;
font-size: 11px;
font-weight: 500;
line-height: 20px;
`

const Collapse = styled.button`
width: 24px;
height: 18px;
display: flex;
align-items: center;
justify-content: center;
margin-top: 2px;
border: 1px solid #2f3340;
border-radius: 3px;
`

const FavoritesBar = styled.div`
position: absolute;
top: 23px;
right: 21px;
width: 397px;
height: 29px;
display: flex;
align-items: center;
border-radius: 4px;
background: #1c1c1e;
`

const Grip = styled.i`
width: 8px;
height: 12px;
margin: 0 6px 0 4px;
background: radial-gradient(circle at 1px 1px, #5c5c5c 1px, transparent 1px) 0 0 / 4px 4px;
`

const FavoriteTool = styled.button`
flex: 1;
display: flex;
justify-content: center;
color: ${({ $blue }) => ($blue ? "#3a5be0" : "#cfcfcf")};
`

const Watermark = styled.div`
position: absolute;
left: 10px;
bottom: 5px;
display: flex;
align-items: center;
gap: 6px;
color: #dedede;
font-family: Inter, sans-serif;
font-size: 17px;
font-weight: 600;
line-height: 24px;
`

const AddAlert = styled.button`
position: absolute;
top: 400px;
right: 0;
width: 18px;
height: 18px;
display: flex;
align-items: center;
justify-content: center;
background: #2a2d38;
`

const PriceAxis = styled.div`
position: relative;
flex: none;
width: 52px;
font-family: "Open Sans", sans-serif;
font-size: 10px;
`

const PriceTag = styled.span`
position: absolute;
left: 1px;
width: 46px;
height: 14px;
padding-right: 4px;
background: ${({ $kind }) => TAG[$kind] || "transparent"};
color: ${({ $kind }) => ($kind ? "#fff" : "#b4b6c0")};
font-weight: ${({ $kind }) => ($kind ? 600 : 400)};
line-height: 14px;
text-align: right;
`

const LiveTag = styled(PriceTag)`
height: 27px;
background: ${TAG.live};
color: #fff;
font-weight: 600;

small {
    display: block;
    padding-left: 7px;
    font-size: 10px;
    font-weight: 400;
    line-height: 11px;
    text-align: left;
    color: #d5f0ea;
}
`

const CursorPrice = styled(PriceTag)`
height: 18px;
background: #363945;
color: #fff;
font-weight: 600;
line-height: 18px;
`

const AxisHead = styled.div`
position: relative;
height: 28px;
padding: 4px 4px 0 3px;
background: #181b28;
`

const CurrencyBox = styled.div`
height: 20px;
display: flex;
align-items: center;
padding-left: 3px;
border: 1px solid #2e2e2e;
border-radius: 3px;
background: #0f0f0f;
`

const Currency = styled.select`
flex: 1;
min-width: 0;
appearance: none;
font-family: Lato, sans-serif;
font-size: 10px;
font-weight: 700;
`

const TimeAxis = styled.div`
position: relative;
flex: none;
height: 24px;
border-bottom: 1px solid #26282f;
overflow: hidden;
`

const TimeLabel = styled.span`
position: absolute;
top: 5px;
transform: translateX(-50%);
font-family: "Open Sans", sans-serif;
font-size: 10px;
font-weight: ${({ $bold }) => ($bold ? 700 : 400)};
line-height: 16px;
color: #b4b6c0;
`

const CursorTime = styled.span`
position: absolute;
top: 1px;
width: 110px;
height: 20px;
display: flex;
justify-content: space-between;
padding: 0 7px 0 8px;
transform: translateX(-50%);
background: #363945;
color: #fff;
font-size: 10px;
font-weight: 700;
line-height: 22px;
white-space: nowrap;
`

const AxisSettings = styled.button`
position: absolute;
right: 18px;
top: 5px;
color: #b4b6c0;
`

const RangeBar = styled.div`
flex: none;
height: 31px;
display: flex;
align-items: center;
padding: 0 8px 0 11px;
background: #0f0f0f;
`

const Range = styled.button`
margin-right: 8px;
font-size: 11px;
font-weight: 700;
white-space: nowrap;
`

const Clock = styled.button`
font-size: 11px;
font-weight: 700;
white-space: nowrap;
`

const Panel = styled.section`
position: relative;
flex: none;
width: 171px;
display: flex;
flex-direction: column;
border-left: 4px solid #2b2b2b;
border-right: 1px solid #2b2b2b;
`

const PanelHead = styled.div`
height: 39px;
display: flex;
align-items: center;
padding: 0 10px 0 13px;
`

const PanelTitle = styled.strong`
flex: 1;
font-size: 12px;
color: #f0f0f0;
`

const Table = styled.table`
display: block;
font-size: 11px;

thead, tbody {
    display: block;
}
`

const Row = styled.tr`
height: 25px;
display: flex;
align-items: center;
border-bottom: 1px solid #2b2b2b;
border-radius: ${({ $selected }) => ($selected ? "4px" : "0")};
box-shadow: ${({ $selected }) => ($selected ? "inset 0 0 0 2px #a8a8a8" : "none")};

td, th {
    padding: 0;
}
`

const HeadRow = styled(Row)`
margin-bottom: 4px;
color: #858585;
`

const FlagCell = styled.td`
width: 13px;
`

const NameHead = styled.th`
flex: 1;
font-weight: 400;
text-align: left;
`

const ChangeHead = styled.th`
margin-right: 12px;
font-weight: 400;
`

const NameCell = styled.td`
flex: 1;
display: flex;
align-items: center;
gap: 3px;
color: #e4e4e4;
font-weight: 700;
`

const ChangeCell = styled.td`
margin-right: 12px;
font-family: "Open Sans", sans-serif;
font-weight: 500;
color: ${({ $down }) => ($down ? "#d9284c" : "#22ab7f")};
`

const CollapsePanel = styled.button`
position: absolute;
left: -3px;
bottom: 49px;
width: 7px;
height: 20px;
border-radius: 0 3px 3px 0;
background: #0f0f0f;
line-height: 18px;
`

const DetailBar = styled.div`
height: 42px;
display: flex;
align-items: center;
padding: 0 6px 0 12px;
border-top: 4px solid #2b2b2b;
`

const DetailName = styled.strong`
flex: 1;
padding-left: 5px;
color: #e4e4e4;
`

const RightRail = styled.aside`
flex: none;
width: 37px;
display: flex;
flex-direction: column;
`

const WidgetButton = styled.button`
position: relative;
width: 37px;
height: 38px;
display: flex;
align-items: center;
justify-content: center;
`

const WidgetFace = styled.span`
width: 32px;
height: 31px;
display: flex;
align-items: center;
justify-content: center;
border-radius: 6px;
background: #3d3d3d;
`

const AppsFace = styled.span`
width: 29px;
height: 29px;
display: flex;
align-items: center;
justify-content: center;
border-radius: 50%;
background: #f2f2f2;
`

const BellBadge = styled.span`
position: absolute;
right: 4px;
top: 4px;
width: 13px;
height: 13px;
border-radius: 50%;
background: #e0214b;
color: #fff;
font-size: 9px;
font-weight: 700;
line-height: 13px;
`

const WidgetRule = styled.i`
height: 10px;
background: linear-gradient(#3a3a3a, #3a3a3a) center / 28px 1px no-repeat;
`
